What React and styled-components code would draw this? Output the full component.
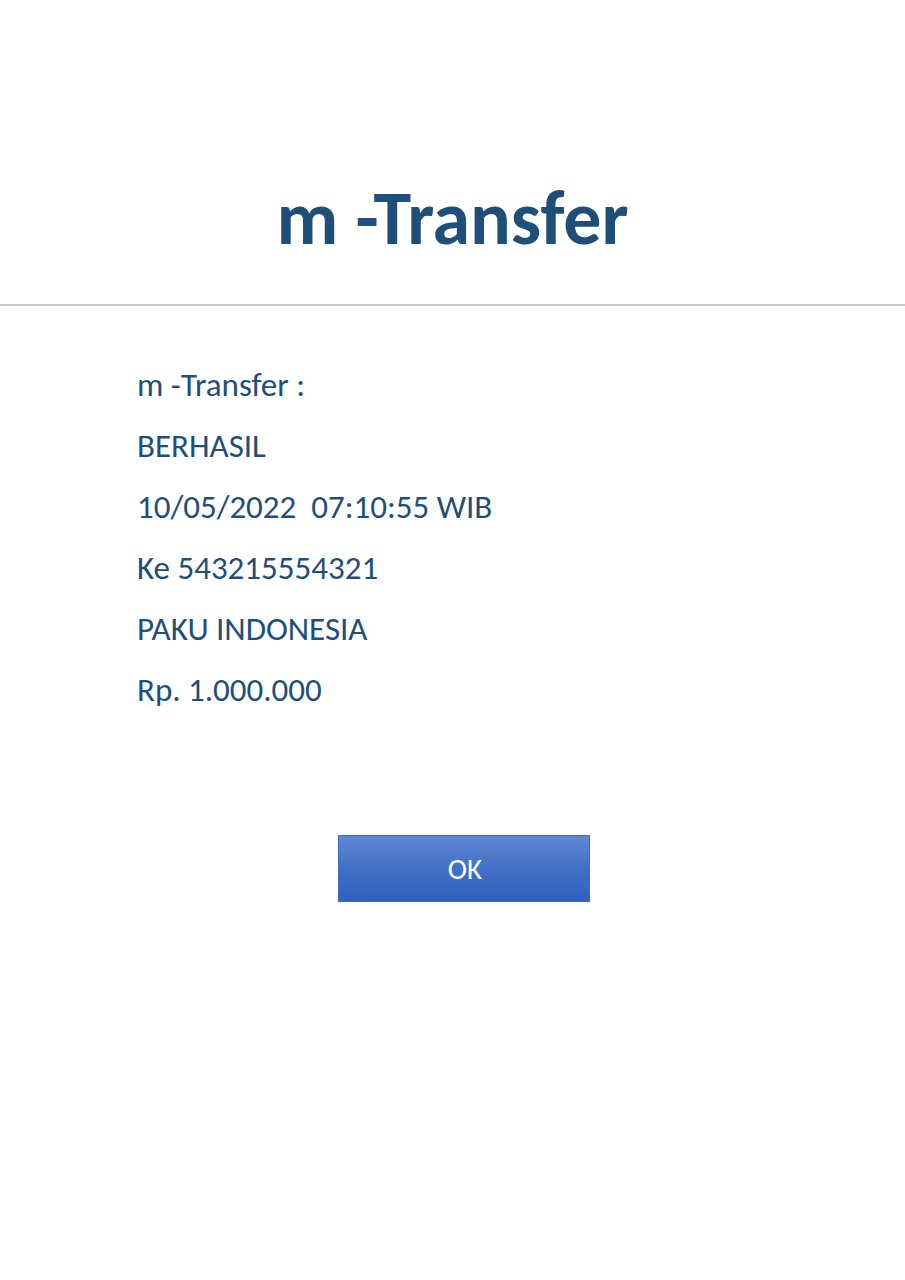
import React from 'react'
import styled, { createGlobalStyle } from 'styled-components'

const GlobalStyle = createGlobalStyle`
    html, body {
        margin: 0;
        padding: 0;
        background: #ffffff;
    }
    body {
        font-family: Carlito, "Open Sans", "Noto Sans", sans-serif;
    }
`

const details = [
    'm -Transfer :',
    'BERHASIL',
    '10/05/2022\u00a0\u00a007:10:55 WIB',
    'Ke 543215554321',
    'PAKU INDONESIA',
    'Rp. 1.000.000',
]

function App() {
    return (
        <>
            <GlobalStyle />
            <Page>
                <Header>
                    <h1>m -Transfer</h1>
                </Header>
                <Divider />
                <Details>
                    {details.map((line, index) => (
                        <Line key={index}>{line}</Line>
                    ))}
                </Details>
                <Actions>
                    <OkButton type="button">OK</OkButton>
                </Actions>
            </Page>
        </>
    )
}

const Page = styled.div`
    width: 905px;
    height: 1280px;
    display: flex;
    flex-direction: column;
    background: #ffffff;
`

const Header = styled.div`
    height: 304px;
    display: flex;
    justify-content: center;
    box-sizing: border-box;
    padding-top: 178px;

    h1 {
        margin: 0;
        color: #1f4e79;
        font-size: 76px;
        font-weight: 700;
        line-height: 80px;
    }
`

const Divider = styled.div`
    height: 2px;
    background: #c8c8c8;
`

const Details = styled.div`
    display: flex;
    flex-direction: column;
    padding: 49px 0 0 137px;
`

const Line = styled.div`
    color: #1f4e79;
    font-size: 33px;
    line-height: 61px;
`

const Actions = styled.div`
    display: flex;
    padding: 114px 0 0 338px;
`

const OkButton = styled.button`
    width: 252px;
    height: 67px;
    border: 1px solid #3e6bbd;
    background: linear-gradient(to bottom, #5f88d4 0%, #4270c6 50%, #2f60be 100%);
    color: #ffffff;
    font-family: Carlito, "Open Sans", "Noto Sans", sans-serif;
    font-size: 29px;
    padding: 0 0 0 2px;
    cursor: pointer;
`

export default App
